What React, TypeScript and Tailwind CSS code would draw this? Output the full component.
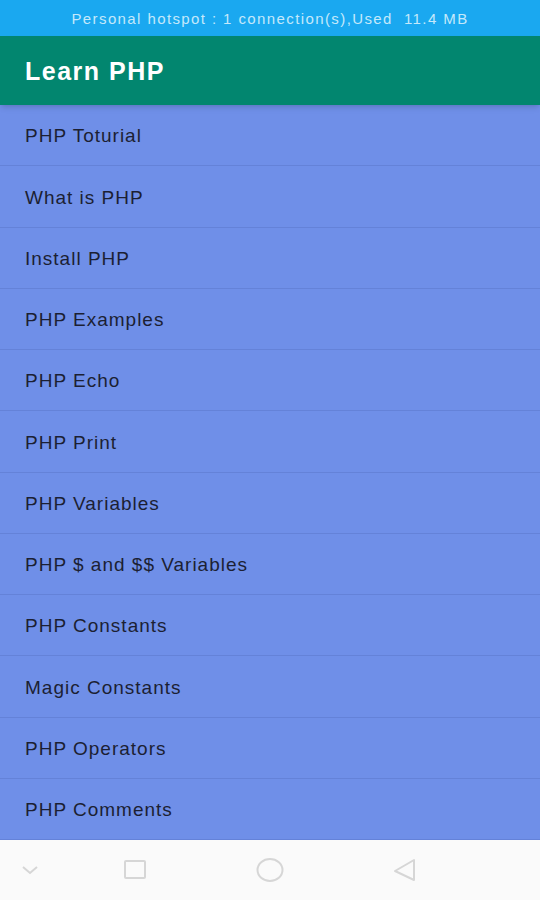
import React from 'react';

const topics = [
  'PHP Toturial',
  'What is PHP',
  'Install PHP',
  'PHP Examples',
  'PHP Echo',
  'PHP Print',
  'PHP Variables',
  'PHP $ and $$ Variables',
  'PHP Constants',
  'Magic Constants',
  'PHP Operators',
  'PHP Comments',
];

const App: React.FC = () => {
  return (
    <div className="w-[540px] h-[900px] flex flex-col overflow-hidden" style={{ fontFamily: '"Liberation Sans", Arial, sans-serif' }}>
      {/* Status bar */}
      <div className="h-[36px] bg-[#1aa8f0] flex items-center justify-center pt-[2px]">
        <span className="text-[15px] text-[#c4e8fb] tracking-[1.4px]">Personal hotspot : 1 connection(s),Used&nbsp; 11.4 MB</span>
      </div>

      {/* Toolbar */}
      <div className="h-[69px] bg-[#02866f] flex items-center px-[25px] pt-[2px] shadow-md z-10">
        <h1 className="text-[25px] font-bold text-white tracking-[1.5px]">Learn PHP</h1>
      </div>

      {/* List */}
      <div className="flex-1 bg-[#6f8fe8] flex flex-col">
        {topics.map((t, i) => (
          <div key={i} className="flex-1 flex items-center px-[25px] pt-[3px] border-b border-[#6482d8]">
            <span className="text-[19px] text-[#1c1f33] tracking-[1px]">{t}</span>
          </div>
        ))}
      </div>

      {/* Nav bar */}
      <div className="h-[60px] bg-[#fafafa] flex items-center">
        <div className="w-[60px] flex justify-center">
          <svg width="20" height="12" viewBox="0 0 20 12" fill="none" stroke="#d6d6d6" strokeWidth="2">
            <path d="M3 3 L10 9 L17 3" />
          </svg>
        </div>
        <div className="w-[150px] flex justify-center">
          <svg width="24" height="22" viewBox="0 0 24 22" fill="none" stroke="#d6d6d6" strokeWidth="2">
            <rect x="2" y="2" width="20" height="17" rx="1" />
          </svg>
        </div>
        <div className="w-[120px] flex justify-center">
          <svg width="30" height="28" viewBox="0 0 30 28" fill="none" stroke="#d6d6d6" strokeWidth="2">
            <ellipse cx="15" cy="14" rx="12.5" ry="11" />
          </svg>
        </div>
        <div className="w-[150px] flex justify-center">
          <svg width="26" height="26" viewBox="0 0 26 26" fill="none" stroke="#d6d6d6" strokeWidth="2" strokeLinejoin="round">
            <path d="M22 3 L22 23 L3 14 Z" />
          </svg>
        </div>
      </div>
    </div>
  );
};

export default App;
